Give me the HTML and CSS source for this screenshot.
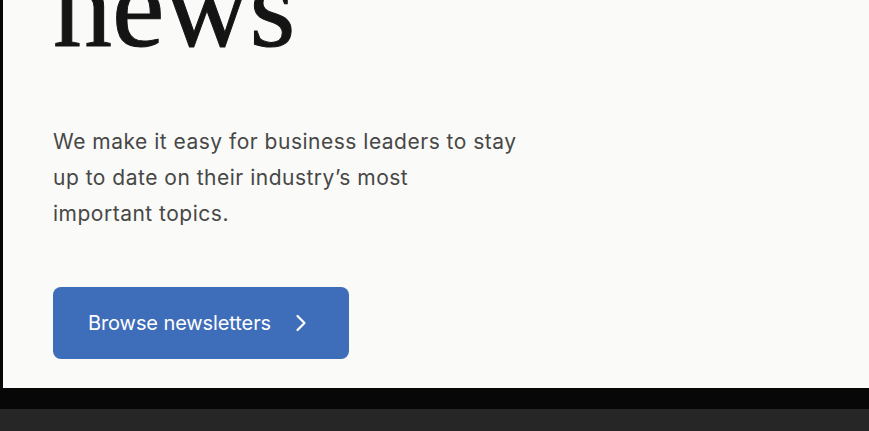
FILE: index.html
```html
<!DOCTYPE html>
<html lang="en">
<head>
  <meta charset="UTF-8">
  <title>News</title>
  <meta name="viewport" content="width=device-width, initial-scale=1.0">
  <link rel="stylesheet" href="styles.css">
</head>
<body>
  <section class="hero">
    <h1 class="hero-title">news</h1>
    <p class="hero-text">We make it easy for business leaders to stay up to date on their industry’s most<br>important topics.</p>
    <a href="#" class="browse-btn">Browse newsletters
      <svg class="chev" width="12" height="18" viewBox="0 0 12 18" aria-hidden="true"><path d="M2.5 2 L9.5 9 L2.5 16" fill="none" stroke="#fff" stroke-width="2.2" stroke-linecap="round" stroke-linejoin="round"/></svg>
    </a>
  </section>
  <div class="band"></div>
  <div class="floor"></div>
</body>
</html>
```

FILE: styles.css
```css
html, body { margin:0; padding:0; }
body { background:#262626; font-family:Inter, "Open Sans", sans-serif; overflow:hidden; }

.hero { height:388px; box-sizing:border-box; background:#fafaf8; border-left:3px solid #070707; padding:0 0 0 50px; overflow:hidden; }
.hero-title { font-family:"Liberation Serif", "Times New Roman", serif; font-weight:400; font-size:118px; line-height:1; color:#141414; margin:-52px 0 0; -webkit-text-stroke:1px #141414; }

.hero-text { max-width:475px; margin:58px 0 0; font-size:21px; line-height:36px; color:#474747; letter-spacing:0.5px; }

.browse-btn { display:flex; align-items:center; gap:24px; box-sizing:border-box; width:296px; height:72px; margin-top:55px; padding-left:35px; background:#3e6db9; color:#fff; border-radius:8px; text-decoration:none; font-size:20px; letter-spacing:-0.1px; }
.chev { display:block; }

.band { height:21px; background:#070707; }
.floor { height:30px; background:#262626; }
```
